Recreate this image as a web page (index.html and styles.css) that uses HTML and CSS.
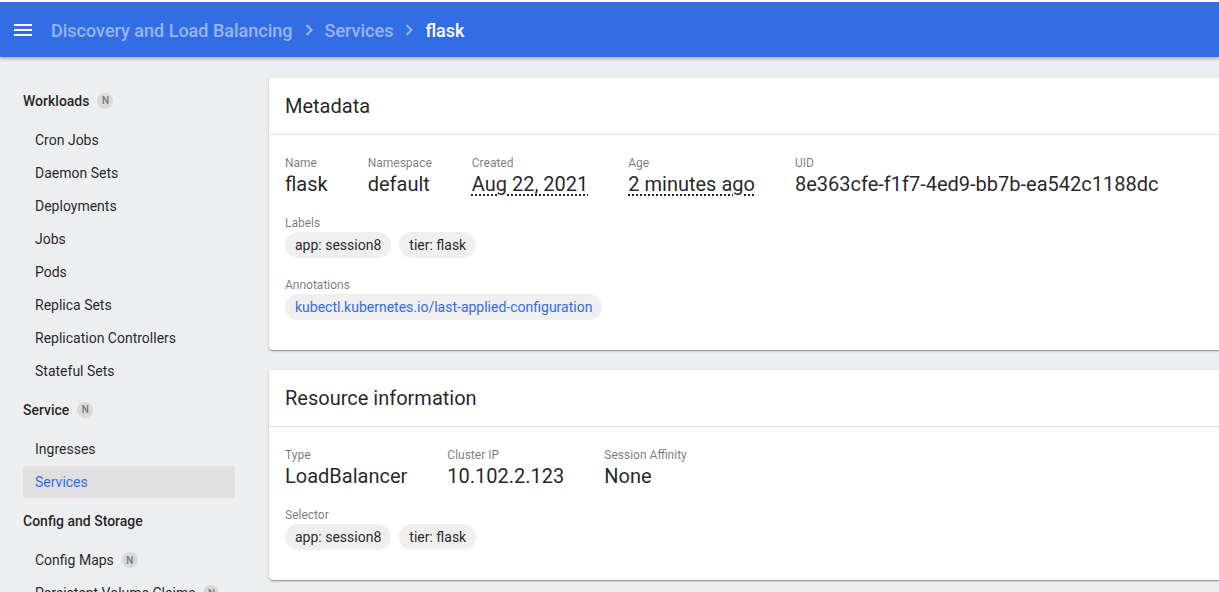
FILE: index.html
```html
<!DOCTYPE html>
<html lang="en">
<head>
<meta charset="utf-8">
<title>flask - Services</title>
<link rel="stylesheet" href="styles.css">
</head>
<body>
<header class="toolbar">
  <svg class="menu-icon" width="24" height="24" viewBox="0 0 24 24"><path fill="#fff" d="M3 18h18v-2H3v2zm0-5h18v-2H3v2zm0-7v2h18V6H3z"/></svg>
  <nav class="crumbs">
    <span class="crumb">Discovery and Load Balancing</span>
    <svg class="chev" width="8" height="12" viewBox="0 0 8 12"><polyline points="1.5,1 6.5,6 1.5,11" fill="none" stroke="currentColor" stroke-width="2"/></svg>
    <span class="crumb">Services</span>
    <svg class="chev" width="8" height="12" viewBox="0 0 8 12"><polyline points="1.5,1 6.5,6 1.5,11" fill="none" stroke="currentColor" stroke-width="2"/></svg>
    <span class="crumb current">flask</span>
  </nav>
</header>
<div class="layout">
  <aside class="sidenav">
    <div class="nav-header">Workloads <span class="badge">N</span></div>
    <div class="nav-item">Cron Jobs</div>
    <div class="nav-item">Daemon Sets</div>
    <div class="nav-item">Deployments</div>
    <div class="nav-item">Jobs</div>
    <div class="nav-item">Pods</div>
    <div class="nav-item">Replica Sets</div>
    <div class="nav-item">Replication Controllers</div>
    <div class="nav-item">Stateful Sets</div>
    <div class="nav-header">Service <span class="badge">N</span></div>
    <div class="nav-item">Ingresses</div>
    <div class="nav-item active">Services</div>
    <div class="nav-header">Config and Storage</div>
    <div class="nav-item">Config Maps <span class="badge">N</span></div>
    <div class="nav-item">Persistent Volume Claims <span class="badge">N</span></div>
  </aside>
  <main class="content">
    <section class="card">
      <div class="card-title">Metadata</div>
      <div class="card-body">
        <div class="fields">
          <div class="field"><div class="label">Name</div><div class="value">flask</div></div>
          <div class="field"><div class="label">Namespace</div><div class="value">default</div></div>
          <div class="field"><div class="label">Created</div><div class="value dotted">Aug 22, 2021</div></div>
          <div class="field"><div class="label">Age</div><div class="value dotted">2 minutes ago</div></div>
          <div class="field"><div class="label">UID</div><div class="value">8e363cfe-f1f7-4ed9-bb7b-ea542c1188dc</div></div>
        </div>
        <div class="section">
          <div class="label">Labels</div>
          <div class="chips"><span class="chip">app: session8</span><span class="chip">tier: flask</span></div>
        </div>
        <div class="section">
          <div class="label">Annotations</div>
          <div class="chips"><span class="chip link">kubectl.kubernetes.io/last-applied-configuration</span></div>
        </div>
      </div>
    </section>
    <section class="card">
      <div class="card-title">Resource information</div>
      <div class="card-body">
        <div class="fields">
          <div class="field"><div class="label">Type</div><div class="value">LoadBalancer</div></div>
          <div class="field"><div class="label">Cluster IP</div><div class="value">10.102.2.123</div></div>
          <div class="field"><div class="label">Session Affinity</div><div class="value">None</div></div>
        </div>
        <div class="section">
          <div class="label">Selector</div>
          <div class="chips"><span class="chip">app: session8</span><span class="chip">tier: flask</span></div>
        </div>
      </div>
    </section>
  </main>
</div>
</body>
</html>
```

FILE: styles.css
```css
html, body {
  margin: 0;
  padding: 0;
  height: 100%;
  overflow: hidden;
}
body {
  font-family: Roboto, "Liberation Sans", sans-serif;
  background: #edeef0;
  color: rgba(0, 0, 0, 0.87);
}
.toolbar {
  position: relative;
  z-index: 2;
  box-sizing: border-box;
  height: 57px;
  border-top: 2px solid #ffffff;
  background: #326de6;
  display: flex;
  align-items: center;
  padding-left: 11px;
  box-shadow: 0 2px 3px rgba(0, 0, 0, 0.25);
}
.menu-icon {
  display: block;
  margin-right: 16px;
}
.crumbs {
  display: flex;
  align-items: center;
  font-size: 18px;
  font-weight: 500;
  color: rgba(255, 255, 255, 0.5);
  gap: 12px;
  padding-top: 1px;
}
.chev {
  display: block;
}
.crumb.current {
  color: #ffffff;
}
.layout {
  display: flex;
  height: calc(100% - 57px);
}
.sidenav {
  flex: 0 0 257px;
  box-sizing: border-box;
  padding: 22px 22px 0 23px;
  font-size: 14px;
}
.nav-header {
  box-sizing: border-box;
  height: 45px;
  padding-bottom: 2px;
  display: flex;
  align-items: center;
  font-weight: 500;
  color: rgba(0, 0, 0, 0.87);
}
.nav-item {
  height: 32px;
  margin-bottom: 1px;
  display: flex;
  align-items: center;
  padding-left: 12px;
  border-radius: 2px;
  color: rgba(0, 0, 0, 0.87);
}
.nav-item.active {
  background: #e0e0e0;
  color: #326de6;
}
.badge {
  display: inline-flex;
  align-items: center;
  justify-content: center;
  width: 16px;
  height: 16px;
  border-radius: 50%;
  background: #d9d9d9;
  color: #757575;
  font-size: 10px;
  font-weight: 500;
  margin-left: 8px;
}
.content {
  flex: 1 1 auto;
  min-width: 0;
  overflow: hidden;
  padding: 21px 0 0 12px;
}
.card {
  width: 1000px;
  background: #ffffff;
  border-radius: 4px;
  box-shadow: 0 1px 3px rgba(0, 0, 0, 0.2), 0 1px 1px rgba(0, 0, 0, 0.14), 0 2px 1px -1px rgba(0, 0, 0, 0.12);
  margin-bottom: 20px;
}
.card-title {
  height: 56px;
  display: flex;
  align-items: center;
  padding-left: 16px;
  font-size: 20px;
  border-bottom: 1px solid #e0e0e0;
}
.card-body {
  padding: 19px 16px 28px 16px;
}
.fields {
  display: flex;
  gap: 40px;
}
.label {
  font-size: 12px;
  line-height: 18px;
  margin-bottom: -2px;
  color: rgba(0, 0, 0, 0.54);
}
.value {
  font-size: 20px;
  line-height: 28px;
  white-space: nowrap;
}
.value.dotted {
  text-decoration: underline dotted;
  text-underline-offset: 3px;
}
.section {
  margin-top: 16px;
}
.chips {
  display: flex;
}
.chip {
  height: 26px;
  line-height: 26px;
  padding: 0 10px;
  margin: 2px 8px 2px 0;
  border-radius: 13px;
  background: #efefef;
  font-size: 14px;
  white-space: nowrap;
}
.chip.link {
  color: #326de6;
}
```
